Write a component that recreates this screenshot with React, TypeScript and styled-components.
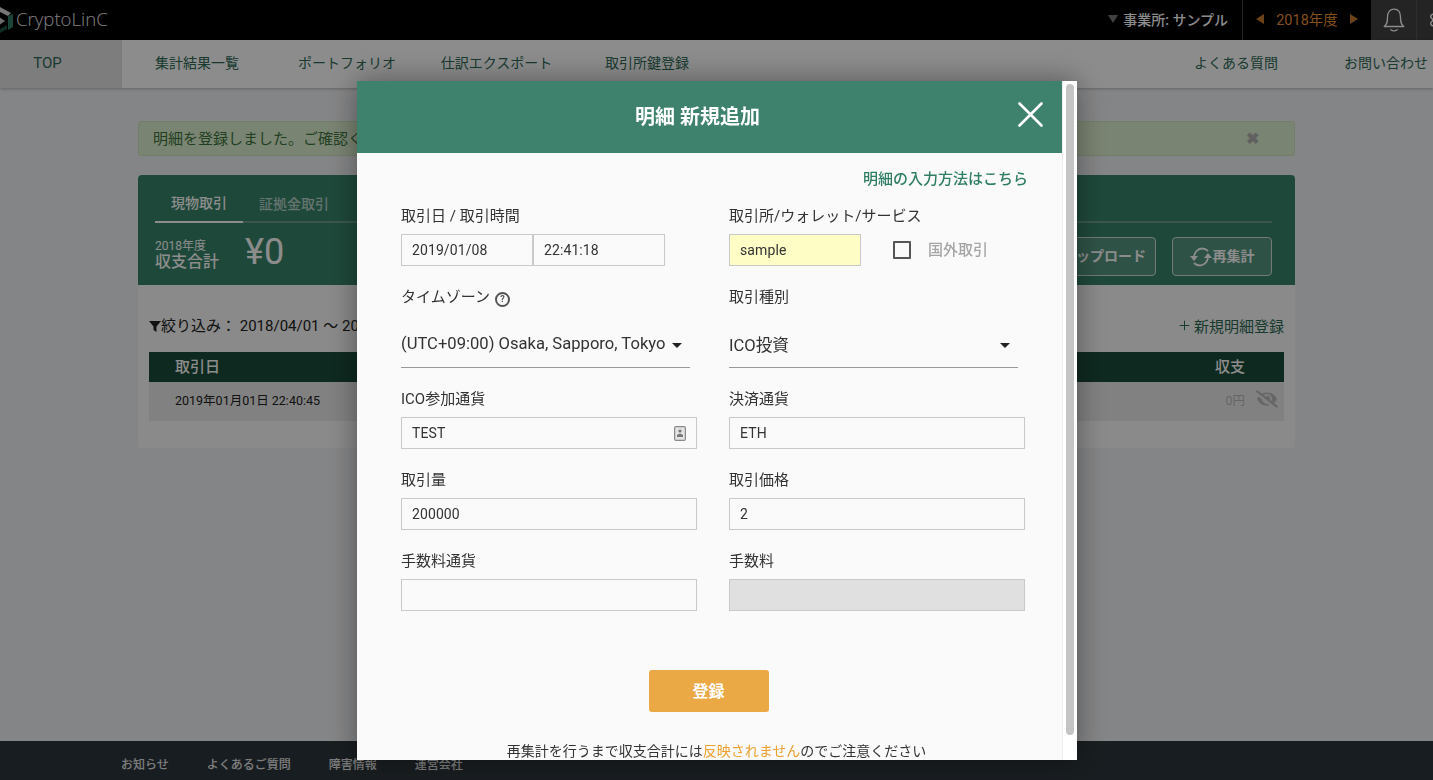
import React from 'react';
import styled, {createGlobalStyle} from 'styled-components';
import {Settings, Plus} from 'lucide-react';
import {FaEyeSlash} from 'react-icons/fa';

const JP = `"Noto Sans CJK JP", "Noto Sans", Roboto, sans-serif`;

const GlobalStyle = createGlobalStyle`
  html, body {
    margin: 0;
    height: 100%;
    overflow: hidden;
    background: #f1f2f4;
    font-family: Roboto, ${JP};
    color: #333;
  }
  * { box-sizing: border-box; }
`;

const Page = styled.div`
  width: 1433px;
  height: 780px;
  display: flex;
  flex-direction: column;
  overflow: hidden;
`;

const TopBar = styled.header`
  height: 40px;
  flex: none;
  background: #000;
  display: flex;
  align-items: center;
  justify-content: space-between;
`;

const Logo = styled.div`
  display: flex;
  align-items: center;
  gap: 3px;
  margin-left: -17px;
  padding-bottom: 3px;
  color: #e6e6e6;
  font-family: "Open Sans", sans-serif;
  font-size: 18.6px;
  font-weight: 300;
`;

const TopRight = styled.div`
  display: flex;
  align-items: stretch;
  height: 40px;
`;

const Office = styled.div`
  display: flex;
  align-items: center;
  gap: 5px;
  padding: 0 14px 3px 0;
  color: #fff;
  font-size: 14px;
  font-weight: 500;
`;

const Triangle = styled.span<{$dir: 'down' | 'left' | 'right'; $color: string}>`
  width: 0;
  height: 0;
  ${({$dir, $color}) =>
    $dir === 'down'
      ? `border-left: 5px solid transparent; border-right: 5px solid transparent; border-top: 8px solid ${$color};`
      : $dir === 'left'
      ? `border-top: 5px solid transparent; border-bottom: 5px solid transparent; border-right: 8px solid ${$color};`
      : `border-top: 5px solid transparent; border-bottom: 5px solid transparent; border-left: 8px solid ${$color};`}
`;

const Year = styled.div`
  width: 129px;
  border-left: 1px solid #444;
  padding-bottom: 3px;
  display: flex;
  align-items: center;
  justify-content: center;
  gap: 12px;
  color: #e8913a;
  font-size: 14.5px;
`;

const IconCell = styled.div`
  width: 46px;
  flex: none;
  background: #424242;
  border-right: 1px solid #555;
  display: flex;
  align-items: center;
  justify-content: center;
  color: #fff;
`;

const LastCell = styled(IconCell)`
  width: 16px;
  justify-content: flex-start;
  overflow: hidden;
  border-right: 0;
  padding-left: 11px;
  & > svg { flex: none; }
`;

const BellIcon = styled.svg`
  width: 26px;
  height: 26px;
  fill: none;
  stroke: currentColor;
  stroke-width: 1.2;
  stroke-linecap: round;
  stroke-linejoin: round;
`;

const Nav = styled.nav`
  height: 48px;
  flex: none;
  background: #fff;
  display: flex;
  align-items: stretch;
  box-shadow: 0 1px 3px rgba(0, 0, 0, 0.25);
  position: relative;
  overflow: hidden;
`;

const NavTop = styled.a`
  width: 122px;
  background: #e4e4e4;
  color: #2f6b57;
  font-size: 15px;
  display: flex;
  align-items: center;
  justify-content: center;
  padding: 0 27px 2px 0;
`;

const NavItem = styled.a<{$width: number}>`
  width: ${({$width}) => $width}px;
  flex: none;
  color: #2f6b57;
  font-size: 14px;
  padding-bottom: 4px;
  display: flex;
  align-items: center;
  justify-content: center;
`;

const NavSpacer = styled.div`
  flex: 1;
`;

const LastNavItem = styled(NavItem)`
  margin-right: -28px;
`;

const Main = styled.main`
  flex: 1;
  padding: 33px 138px 0;
`;

const Alert = styled.div`
  height: 35px;
  background: #dff0d0;
  border: 1px solid #cfe5bd;
  border-radius: 3px;
  color: #3c763d;
  font-size: 15px;
  display: flex;
  align-items: center;
  justify-content: space-between;
  padding: 0 35px 3px 14px;
`;

const AlertClose = styled.span`
  color: #b0b0b0;
  font-size: 16px;
  font-weight: 700;
  line-height: 1;
  margin-top: 3px;
`;

const Card = styled.section`
  margin-top: 19px;
  height: 273px;
  background: #fbfbfb;
  border-radius: 4px;
  overflow: hidden;
`;

const CardHead = styled.div`
  height: 110px;
  background: #38856a;
  padding: 7px 23px 0 17px;
`;

const Tabs = styled.div`
  display: flex;
  height: 41px;
  border-bottom: 2px solid #6c9f8d;
`;

const Tab = styled.div<{$active?: boolean}>`
  width: 88px;
  height: 41px;
  font-size: 14px;
  font-weight: 500;
  display: flex;
  align-items: center;
  justify-content: center;
  color: ${({$active}) => ($active ? '#fff' : '#b9d4ca')};
  border-bottom: ${({$active}) => ($active ? '2px solid #fff' : 'none')};
  & + & { width: 102px; }
`;

const SumRow = styled.div`
  display: flex;
  align-items: center;
  justify-content: space-between;
  padding-top: 12px;
`;

const Sum = styled.div`
  display: flex;
  align-items: center;
  gap: 26px;
  margin-bottom: 4px;
  color: #fff;
`;

const SumLabel = styled.div`
  display: flex;
  flex-direction: column;
  font-size: 16px;
  font-weight: 500;
  line-height: 18px;
  & > small {
    font-size: 12px;
    font-weight: 400;
    line-height: 14px;
  }
`;

const SumValue = styled.div`
  font-size: 36px;
  line-height: 34px;
  margin-bottom: 5px;
`;

const HeadButtons = styled.div`
  display: flex;
  gap: 16px;
`;

const HeadButton = styled.div<{$width: number}>`
  width: ${({$width}) => $width}px;
  height: 39px;
  background: rgba(255, 255, 255, 0.15);
  border: 1px solid #d0dcd8;
  border-radius: 4px;
  color: #fff;
  font-size: 14px;
  font-weight: 700;
  display: flex;
  align-items: center;
  justify-content: center;
  gap: 1px;
  padding-bottom: 3px;
`;

const RefreshIcon = styled.svg`
  width: 22px;
  height: 20px;
  margin-top: 3px;
  & path {
    fill: none;
    stroke: currentColor;
    stroke-width: 1.8;
  }
  & polygon { fill: currentColor; }
`;

const CardBody = styled.div`
  padding: 29px 11px 0 11px;
`;

const FilterRow = styled.div`
  display: flex;
  align-items: center;
  justify-content: space-between;
  height: 24px;
  margin-bottom: 14px;
`;

const Filter = styled.div`
  display: flex;
  align-items: center;
  font-size: 15px;
  color: #222;
  padding-bottom: 3px;
`;

const FilterIcon = styled.svg`
  width: 12px;
  height: 12px;
  fill: #222;
  margin-top: 2px;
`;

const NewLink = styled.div`
  display: flex;
  align-items: center;
  gap: 2px;
  color: #2f6b57;
  font-size: 15px;
  padding-bottom: 2px;
`;

const TableHead = styled.div`
  height: 30px;
  background: #1b4c3a;
  color: #fff;
  font-size: 15px;
  font-weight: 500;
  display: flex;
  align-items: center;
  justify-content: space-between;
  padding: 0 39px 4px 26px;
`;

const TableRow = styled.div`
  height: 39px;
  background: #ebebeb;
  font-size: 12.5px;
  color: #222;
  display: flex;
  align-items: center;
  justify-content: space-between;
  padding: 0 6px 5px 26px;
`;

const RowRight = styled.div`
  display: flex;
  align-items: center;
  gap: 11px;
  color: #bbb;
`;

const Footer = styled.footer`
  height: 39px;
  flex: none;
  background: #2d363c;
  display: flex;
  align-items: center;
  gap: 38px;
  padding: 6px 0 0 121px;
  color: #e4e4e4;
  font-size: 12px;
  font-weight: 500;
`;

const Overlay = styled.div`
  position: fixed;
  inset: 0;
  background: rgba(0, 0, 0, 0.45);
`;

const Modal = styled.div`
  position: fixed;
  left: 357px;
  top: 81px;
  width: 720px;
  height: 679px;
  background: #fafafa;
  box-shadow: 0 0 28px rgba(0, 0, 0, 0.4);
  overflow: hidden;
  display: flex;
`;

const ModalMain = styled.div`
  width: 705px;
  flex: none;
`;

const ScrollTrack = styled.div`
  width: 15px;
  flex: none;
  background: #fff;
  border-left: 1px solid #eee;
  padding: 3px 3px 0;
`;

const ScrollThumb = styled.div`
  width: 8px;
  height: 651px;
  background: #c4c4c4;
  border-radius: 4px;
`;

const ModalHeader = styled.div`
  height: 72px;
  background: #3e826d;
  color: #fff;
  font-size: 20px;
  font-weight: 700;
  display: flex;
  align-items: center;
  justify-content: center;
  padding: 0 24px 3px 0;
  position: relative;
`;

const CloseIcon = styled.svg`
  position: absolute;
  right: 19px;
  top: 21px;
  width: 25px;
  height: 25px;
  stroke: #fff;
  stroke-width: 2.6;
  stroke-linecap: round;
`;

const ModalBody = styled.div`
  padding: 15px 34px 0 44px;
`;

const HelpLink = styled.div`
  height: 22px;
  text-align: right;
  color: #2f7d64;
  font-size: 15px;
  font-weight: 500;
  line-height: 22px;
`;

const FormGrid = styled.div`
  margin-top: 17px;
  display: grid;
  grid-template-columns: 296px 296px;
  column-gap: 32px;
  grid-template-rows: 81px 102px 81px 81px 81px;
`;

const Field = styled.div`
  display: flex;
  flex-direction: column;
`;

const Label = styled.label`
  height: 19px;
  margin-bottom: 8px;
  color: #333;
  font-size: 15px;
  line-height: 19px;
  display: flex;
  align-items: center;
  gap: 5px;
`;

const InputRow = styled.div`
  display: flex;
  align-items: center;
`;

const Input = styled.div<{$width?: number; $bg?: string}>`
  width: ${({$width}) => ($width ? `${$width}px` : '100%')};
  height: 32px;
  background: ${({$bg}) => $bg || '#fafafa'};
  border: 1px solid #c9c9c9;
  color: #333;
  font-size: 14px;
  letter-spacing: 0.1px;
  display: flex;
  align-items: center;
  justify-content: space-between;
  padding: 0 10px;
`;

const CheckBox = styled.span`
  width: 18px;
  height: 18px;
  margin-left: 32px;
  border: 2px solid #555;
  border-radius: 1px;
`;

const CheckLabel = styled.span`
  margin: 0 0 3px 17px;
  color: #a5a5a5;
  font-size: 15px;
  font-weight: 500;
`;

const Select = styled.div<{$width: number}>`
  width: ${({$width}) => $width}px;
  height: 53px;
  border-bottom: 1px solid #999;
  color: #333;
  font-size: 16.6px;
  display: flex;
  align-items: center;
  justify-content: space-between;
  padding: 5px 8px 0 0;
`;

const Caret = styled.span`
  width: 0;
  height: 0;
  margin-top: 3px;
  border-left: 5px solid transparent;
  border-right: 5px solid transparent;
  border-top: 5px solid #222;
`;

const HelpIcon = styled.span`
  width: 15px;
  height: 15px;
  margin-top: 3px;
  border: 2px solid #555;
  border-radius: 50%;
  color: #555;
  font-size: 9px;
  font-weight: 700;
  line-height: 11px;
  text-align: center;
`;

const Submit = styled.div`
  width: 120px;
  height: 42px;
  margin: 37px auto 0;
  transform: translateX(-6px);
  background: #eaa945;
  border-radius: 3px;
  color: #fff;
  font-size: 16px;
  font-weight: 700;
  padding-bottom: 3px;
  display: flex;
  align-items: center;
  justify-content: center;
`;

const Note = styled.p`
  margin: 30px 0 0;
  transform: translateX(2px);
  text-align: center;
  color: #333;
  font-size: 14px;
  line-height: 18px;
  & > em {
    font-style: normal;
    color: #eda02f;
  }
`;

const LogoMark = () => (
  <svg width="30" height="30" viewBox="0 0 30 30">
    <polygon points="15,2 28,9 25,12 15,7" fill="#d8d8d8" />
    <polygon points="25,12 30,10 30,23 25,26" fill="#2f7d64" />
    <polygon points="15,30 24,25 24,21 15,26" fill="#1d5443" />
    <polygon points="15,12 22,17 15,22" fill="#c8c8c8" />
  </svg>
);

const IdIcon = () => (
  <svg width="12" height="15" viewBox="0 0 12 15">
    <rect x="0.6" y="0.6" width="10.8" height="13.8" rx="1.5" fill="#e4e4e4" stroke="#888" strokeWidth="1.2" />
    <circle cx="6" cy="5" r="1.6" fill="#777" />
    <path d="M3 11 L3 9 Q6 6.5 9 9 L9 11 Z" fill="#777" />
  </svg>
);

export default function App() {
  return (
    <Page>
      <GlobalStyle />
      <TopBar>
        <Logo>
          <LogoMark />
          CryptoLinC
        </Logo>
        <TopRight>
          <Office>
            <Triangle $dir="down" $color="#777" />
            事業所: サンプル
          </Office>
          <Year>
            <Triangle $dir="left" $color="#c57a2c" />
            2018年度
            <Triangle $dir="right" $color="#c57a2c" />
          </Year>
          <IconCell>
            <BellIcon viewBox="0 0 24 24">
              <path d="M3 18 C6 15.5 6 13 6 9.5 C6 4.5 8.5 2 12 2 C15.5 2 18 4.5 18 9.5 C18 13 18 15.5 21 18 Z" />
              <path d="M9 21 Q12 23 15 21" />
            </BellIcon>
          </IconCell>
          <LastCell>
            <Settings size={22} strokeWidth={1.5} />
          </LastCell>
        </TopRight>
      </TopBar>
      <Nav>
        <NavTop>TOP</NavTop>
        <NavItem $width={150}>集計結果一覧</NavItem>
        <NavItem $width={150}>ポートフォリオ</NavItem>
        <NavItem $width={149}>仕訳エクスポート</NavItem>
        <NavItem $width={152}>取引所鍵登録</NavItem>
        <NavSpacer />
        <NavItem $width={150}>よくある質問</NavItem>
        <LastNavItem $width={150}>お問い合わせ</LastNavItem>
      </Nav>
      <Main>
        <Alert>
          明細を登録しました。ご確認ください。
          <AlertClose>✖</AlertClose>
        </Alert>
        <Card>
          <CardHead>
            <Tabs>
              <Tab $active>現物取引</Tab>
              <Tab>証拠金取引</Tab>
            </Tabs>
            <SumRow>
              <Sum>
                <SumLabel>
                  <small>2018年度</small>
                  収支合計
                </SumLabel>
                <SumValue>¥0</SumValue>
              </Sum>
              <HeadButtons>
                <HeadButton $width={160}>取引履歴アップロード</HeadButton>
                <HeadButton $width={100}>
                  <RefreshIcon viewBox="0 0 22 20">
                    <path d="M4 9 C5 4 9 1.5 12 1.5 C15 1.5 17 3 18 4" />
                    <polygon points="0,9 8,9 4,14" />
                    <path d="M18 11 C17 16 13 18.5 10 18.5 C7 18.5 5 17 4 16" />
                    <polygon points="14,11 22,11 18,6" />
                  </RefreshIcon>
                  再集計
                </HeadButton>
              </HeadButtons>
            </SumRow>
          </CardHead>
          <CardBody>
            <FilterRow>
              <Filter>
                <FilterIcon viewBox="0 0 12 12">
                  <path d="M0 1h12L7.5 6.5V12L4.5 10V6.5z" />
                </FilterIcon>
                絞り込み： 2018/04/01 〜 2019/03/31
              </Filter>
              <NewLink>
                <Plus size={15} strokeWidth={1.6} />
                新規明細登録
              </NewLink>
            </FilterRow>
            <TableHead>
              <span>取引日</span>
              <span>収支</span>
            </TableHead>
            <TableRow>
              <span>2019年01月01日 22:40:45</span>
              <RowRight>
                0円
                <FaEyeSlash size={22} color="#bbb" />
              </RowRight>
            </TableRow>
          </CardBody>
        </Card>
      </Main>
      <Footer>
        <span>お知らせ</span>
        <span>よくあるご質問</span>
        <span>障害情報</span>
        <span>運営会社</span>
      </Footer>
      <Overlay />
      <Modal>
        <ModalMain>
          <ModalHeader>
            明細 新規追加
            <CloseIcon viewBox="0 0 25 25">
              <path d="M1.5 1.5L23.5 23.5M23.5 1.5L1.5 23.5" />
            </CloseIcon>
          </ModalHeader>
          <ModalBody>
            <HelpLink>明細の入力方法はこちら</HelpLink>
            <FormGrid>
              <Field>
                <Label>取引日 / 取引時間</Label>
                <InputRow>
                  <Input $width={132}>2019/01/08</Input>
                  <Input $width={132}>22:41:18</Input>
                </InputRow>
              </Field>
              <Field>
                <Label>取引所/ウォレット/サービス</Label>
                <InputRow>
                  <Input $width={132} $bg="#fdfdc5">sample</Input>
                  <CheckBox />
                  <CheckLabel>国外取引</CheckLabel>
                </InputRow>
              </Field>
              <Field>
                <Label>
                  タイムゾーン
                  <HelpIcon>?</HelpIcon>
                </Label>
                <Select $width={289}>
                  (UTC+09:00) Osaka, Sapporo, Tokyo
                  <Caret />
                </Select>
              </Field>
              <Field>
                <Label>取引種別</Label>
                <Select $width={289}>
                  ICO投資
                  <Caret />
                </Select>
              </Field>
              <Field>
                <Label>ICO参加通貨</Label>
                <Input>
                  TEST
                  <IdIcon />
                </Input>
              </Field>
              <Field>
                <Label>決済通貨</Label>
                <Input>ETH</Input>
              </Field>
              <Field>
                <Label>取引量</Label>
                <Input>200000</Input>
              </Field>
              <Field>
                <Label>取引価格</Label>
                <Input>2</Input>
              </Field>
              <Field>
                <Label>手数料通貨</Label>
                <Input />
              </Field>
              <Field>
                <Label>手数料</Label>
                <Input $bg="#e0e0e0" />
              </Field>
            </FormGrid>
            <Submit>登録</Submit>
            <Note>
              再集計を行うまで収支合計には<em>反映されません</em>のでご注意ください
            </Note>
          </ModalBody>
        </ModalMain>
        <ScrollTrack>
          <ScrollThumb />
        </ScrollTrack>
      </Modal>
    </Page>
  );
}
